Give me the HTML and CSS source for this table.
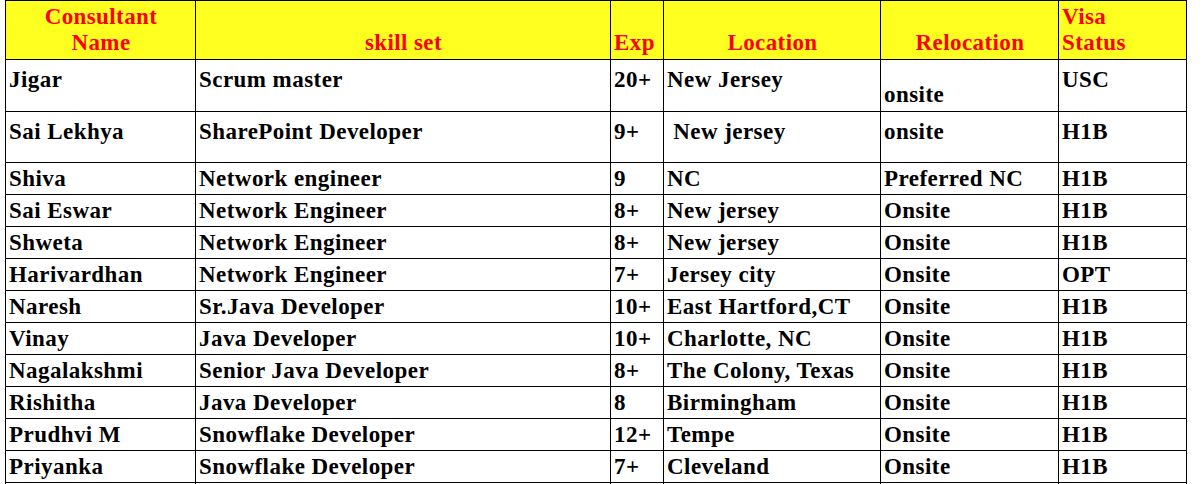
FILE: index.html
```html
<!DOCTYPE html>
<html>
<head>
<meta charset="utf-8">
<link rel="stylesheet" href="styles.css">
</head>
<body>
<table class="roster">
  <colgroup>
    <col class="c-name"><col class="c-skill"><col class="c-exp"><col class="c-loc"><col class="c-rel"><col class="c-visa">
  </colgroup>
  <thead>
    <tr>
      <th class="center">Consultant<br>Name</th>
      <th class="center bottom">skill set</th>
      <th class="left bottom">Exp</th>
      <th class="center bottom">Location</th>
      <th class="center bottom">Relocation</th>
      <th class="left">Visa<br>Status</th>
    </tr>
  </thead>
  <tbody>
    <tr class="tall first">
      <td>Jigar</td><td>Scrum master</td><td>20+</td><td>New Jersey</td><td class="bottom">onsite</td><td>USC</td>
    </tr>
    <tr class="tall second">
      <td>Sai Lekhya</td><td>SharePoint Developer</td><td>9+</td><td>&nbsp;New jersey</td><td>onsite</td><td>H1B</td>
    </tr>
    <tr><td>Shiva</td><td>Network engineer</td><td>9</td><td>NC</td><td>Preferred NC</td><td>H1B</td></tr>
    <tr><td>Sai Eswar</td><td>Network Engineer</td><td>8+</td><td>New jersey</td><td>Onsite</td><td>H1B</td></tr>
    <tr><td>Shweta</td><td>Network Engineer</td><td>8+</td><td>New jersey</td><td>Onsite</td><td>H1B</td></tr>
    <tr><td>Harivardhan</td><td>Network Engineer</td><td>7+</td><td>Jersey city</td><td>Onsite</td><td>OPT</td></tr>
    <tr><td>Naresh</td><td>Sr.Java Developer</td><td>10+</td><td>East Hartford,CT</td><td>Onsite</td><td>H1B</td></tr>
    <tr><td>Vinay</td><td>Java Developer</td><td>10+</td><td>Charlotte, NC</td><td>Onsite</td><td>H1B</td></tr>
    <tr><td>Nagalakshmi</td><td>Senior Java Developer</td><td>8+</td><td>The Colony, Texas</td><td>Onsite</td><td>H1B</td></tr>
    <tr><td>Rishitha</td><td>Java Developer</td><td>8</td><td>Birmingham</td><td>Onsite</td><td>H1B</td></tr>
    <tr><td>Prudhvi M</td><td>Snowflake Developer</td><td>12+</td><td>Tempe</td><td>Onsite</td><td>H1B</td></tr>
    <tr><td>Priyanka</td><td>Snowflake Developer</td><td>7+</td><td>Cleveland</td><td>Onsite</td><td>H1B</td></tr>
    <tr><td>&nbsp;</td><td>&nbsp;</td><td>&nbsp;</td><td>&nbsp;</td><td>&nbsp;</td><td>&nbsp;</td></tr>
  </tbody>
</table>
</body>
</html>
```

FILE: styles.css
```css
html, body {
  margin: 0;
  padding: 0;
  background: #ffffff;
}

.roster {
  margin-left: 5px;
  border-collapse: collapse;
  table-layout: fixed;
  width: 1181px;
  font-family: "Liberation Serif", "Times New Roman", serif;
  font-weight: bold;
  font-size: 23px;
  color: #000000;
}

.c-name { width: 190px; }
.c-skill { width: 415px; }
.c-exp { width: 53px; }
.c-loc { width: 217px; }
.c-rel { width: 178px; }
.c-visa { width: 128px; }

.roster th,
.roster td {
  border: 1px solid #000000;
  padding: 3px 2px 3px 3px;
  white-space: nowrap;
  overflow: hidden;
  text-align: left;
  vertical-align: top;
}

.roster th {
  background: #ffff20;
  color: #ff0000;
  line-height: 26px;
  letter-spacing: 0.4px;
}

.roster td {
  line-height: 25px;
  letter-spacing: 0.45px;
}

.roster .center { text-align: center; }
.roster .left { text-align: left; }
.roster .bottom { vertical-align: bottom; }

.roster tr.first td {
  padding-top: 7px;
  padding-bottom: 19px;
}

.roster tr.first td.bottom {
  padding-bottom: 4px;
}

.roster tr.second td {
  padding-top: 7px;
  padding-bottom: 18px;
}
```
